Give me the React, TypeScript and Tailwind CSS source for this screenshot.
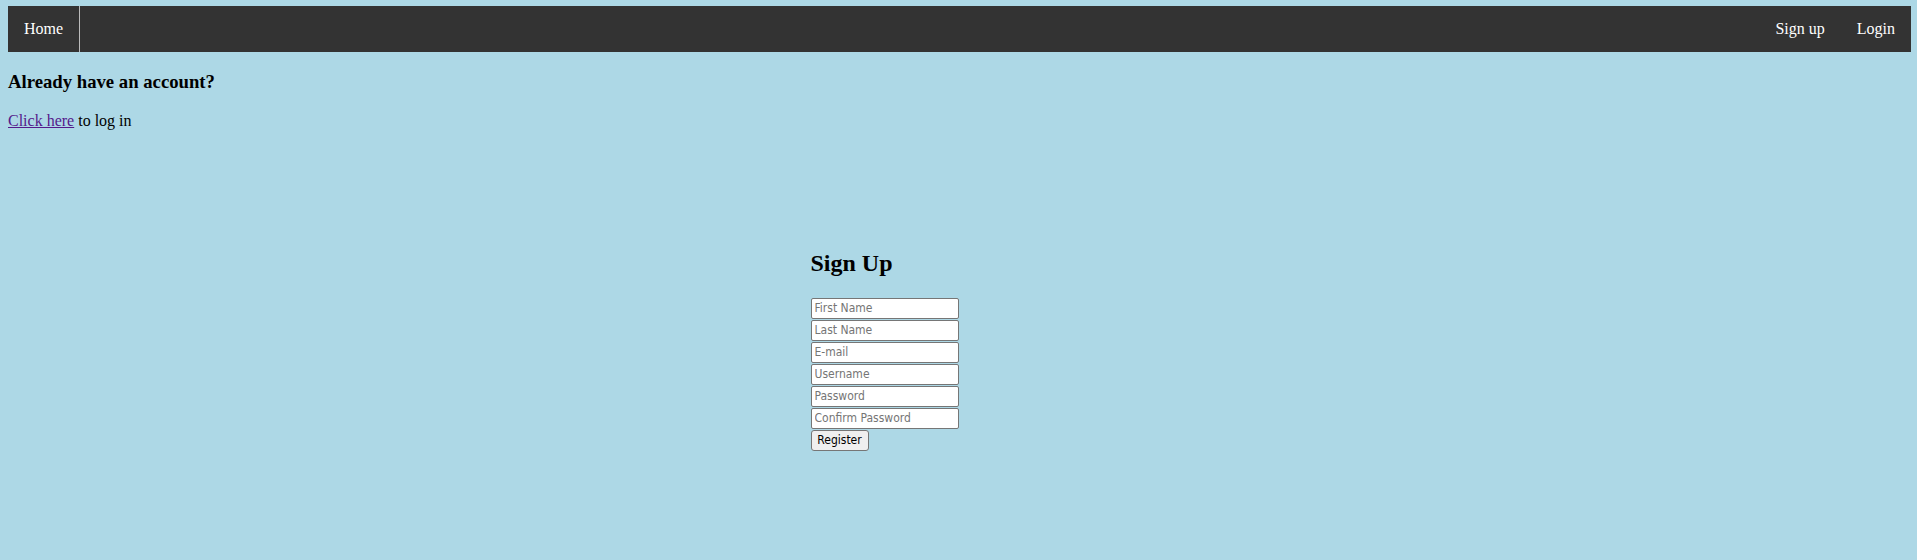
const fields = ['First Name', 'Last Name', 'E-mail', 'Username', 'Password', 'Confirm Password']

function TopNav() {
  return (
    <nav className="flex h-[46px] bg-[#333333] text-[16px] text-white">
      <a href="#" className="flex items-center border-r border-[#bbbbbb] px-4">
        Home
      </a>
      <div className="flex-1" />
      <a href="#" className="flex items-center px-4">
        Sign up
      </a>
      <a href="#" className="flex items-center px-4">
        Login
      </a>
    </nav>
  )
}

function SignUpForm() {
  return (
    <div className="mt-[120px] grid grid-cols-2">
      <form className="flex flex-col items-start justify-self-end pr-[1px]" onSubmit={(e) => e.preventDefault()}>
        <h2 className="mb-[20px] text-[24px] font-bold leading-[27.6px]">Sign Up</h2>
        <div className="flex flex-col gap-[1px] font-['DejaVu_Sans_Condensed','Liberation_Sans',sans-serif] text-[12px]">
          {fields.map((f) => (
            <input
              key={f}
              type={f.includes('Password') ? 'password' : 'text'}
              placeholder={f}
              className="h-[21px] w-[148px] rounded-[2px] border border-[#767676] bg-white px-[3px] text-black outline-none placeholder:text-[#757575]"
            />
          ))}
          <button
            type="submit"
            className="h-[21px] w-[58px] rounded-[3px] border border-[#767676] bg-[#efefef] text-black"
          >
            Register
          </button>
        </div>
      </form>
    </div>
  )
}

export default function App() {
  return (
    <div className="min-h-[560px] bg-[#add8e6] pl-[8px] pr-[6px] pt-[6px] font-['Liberation_Serif',serif] text-[16px] text-black">
      <TopNav />
      <h3 className="mt-[18.72px] text-[18.72px] font-bold leading-[21.5px]">Already have an account?</h3>
      <p className="mt-[19.72px] leading-[18.4px]">
        <a href="#" className="text-[#551a8b] underline">
          Click here
        </a>{' '}
        to log in
      </p>
      <SignUpForm />
    </div>
  )
}
